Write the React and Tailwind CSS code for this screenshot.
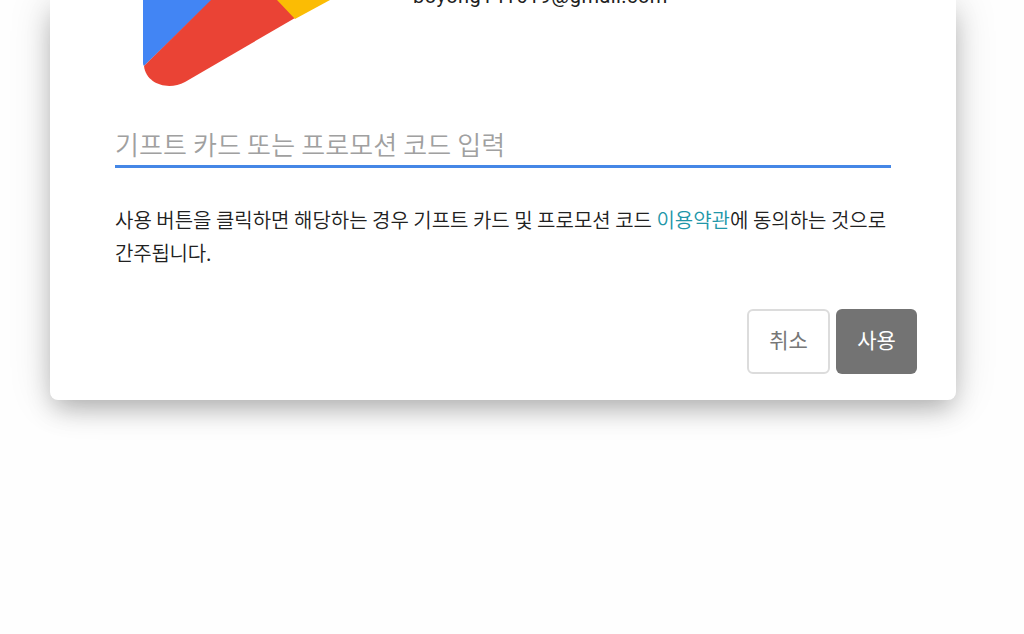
import { useState } from "react";

// LOWER PART OF THE PLAY LOGO, THE TOP IS CUT OFF BY THE WINDOW
function PlayLogo() {
  return (
    <svg width="190" height="90" viewBox="0 0 190 90" className="block">
      <path d="M0 0H69L1 66Q0 65 0 63Z" fill="#4285f4" />
      <path d="M68 0H137L152 18L42 82C25 91 3 84 1 66Z" fill="#ea4335" />
      <path d="M134 0H187L152 19Z" fill="#fbbc04" />
    </svg>
  );
}

function App() {
  const [code, setCode] = useState("");

  return (
    <div className="h-[634px] overflow-hidden bg-[#fefefe] pl-[50px] font-['Noto_Sans_CJK_KR',sans-serif]">
      <div className="flex h-[399.5px] w-[906px] flex-col rounded-b-lg bg-white shadow-[0_0_44px_rgba(0,0,0,0.14),0_12px_26px_-4px_rgba(0,0,0,0.26)]">
        <div className="flex h-[118px] shrink-0 items-start pl-[93px]">
          <PlayLogo />
          <p className="-mt-[18px] ml-[80px] font-[Roboto,sans-serif] text-[20px] leading-7 tracking-[0.45px] text-[#212121]">
            boyong141619@gmail.com
          </p>
        </div>

        <input
          type="text"
          value={code}
          placeholder="기프트 카드 또는 프로모션 코드 입력"
          onChange={(e) => setCode(e.target.value)}
          className="ml-[65px] h-[50px] w-[776px] shrink-0 border-b-3 border-[#4587e6] pt-[4px] text-[26px] leading-[38px] font-[350] tracking-[0.13px] text-[#212121] placeholder:text-[#a0a0a0] focus:outline-none"
        />

        <p className="mt-[35px] ml-[65px] w-[790px] text-[20px] leading-[33px] font-[350] text-[#212121]">
          사용 버튼을 클릭하면 해당하는 경우 기프트 카드 및 프로모션 코드{" "}
          <span className="text-[#2196a8]">이용약관</span>에 동의하는 것으로
          <br />
          <span className="tracking-[-0.2px]">간주됩니다.</span>
        </p>

        <div className="mt-[40px] mr-[39px] flex justify-end gap-[6px]">
          <button
            onClick={() => setCode("")}
            className="h-[65px] w-[83px] rounded-md border-2 border-[#dcdcdc] bg-white pb-[3px] text-[21px] text-[#777777]"
          >
            취소
          </button>
          <button className="h-[65px] w-[81px] rounded-md bg-[#737373] pb-[3px] text-[21px] text-white">
            사용
          </button>
        </div>
      </div>
    </div>
  );
}

export default App;
